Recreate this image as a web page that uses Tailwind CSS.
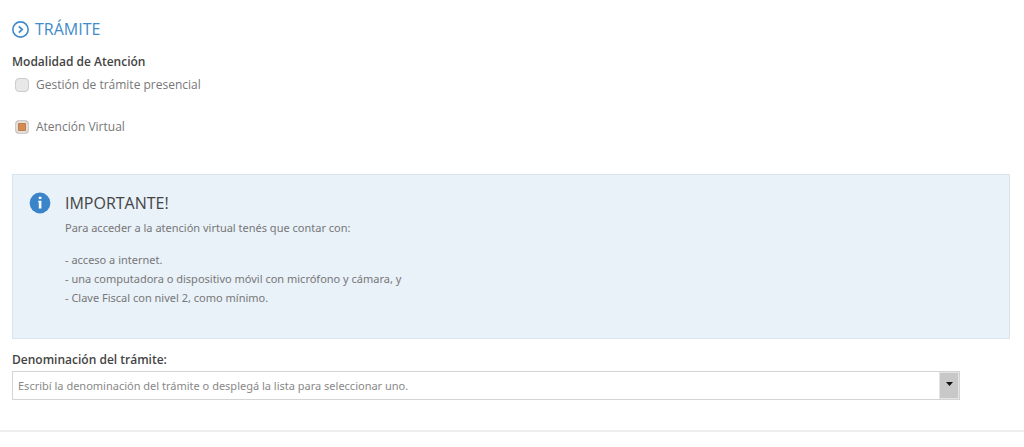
<!DOCTYPE html>
<html lang="es">
<head>
	<meta charset="utf-8">
	<meta name="viewport" content="width=device-width, initial-scale=1">
	<title>Trámite</title>
	<script src="https://cdn.jsdelivr.net/npm/@tailwindcss/browser@4"></script>
</head>
<body class="bg-white font-['Open_Sans','Noto_Sans',sans-serif] text-xs leading-5 text-[#777]">
	<form class="border-b-2 border-[#eee] pt-4 pr-3.5 pb-[30px] pl-3">
		<h1 class="flex items-center gap-1.5 text-base leading-[26px] text-[#428bca]">
			<svg class="size-[17px]" viewBox="0 0 18 18" fill="none" stroke="currentColor">
				<circle cx="9" cy="9" r="8.1" stroke-width="1.7"/>
				<path d="M7.2 5.6 10.8 9l-3.6 3.4" stroke-width="1.9"/>
			</svg>
			TRÁMITE
		</h1>

		<fieldset class="mt-2.5">
			<legend class="font-semibold text-[#444]">Modalidad de Atención</legend>
			<div class="flex items-center gap-1.5 pt-[3px] pl-[3px]">
				<input class="size-3.5 appearance-none rounded border border-[#ccc] bg-[#e8e8e8]" type="radio" name="modalidad" id="presencial">
				<label class="pl-px" for="presencial">Gestión de trámite presencial</label>
			</div>
			<div class="mt-[22px] flex items-center gap-1.5 pl-[3px]">
				<input class="size-3.5 appearance-none rounded border border-[#ccc] bg-[#e8e8e8] checked:bg-[#d98a4e] checked:shadow-[inset_0_0_0_2px_#e4e0d8,inset_0_0_0_3px_#b98055]" type="radio" name="modalidad" id="virtual" checked>
				<label class="pl-px" for="virtual">Atención Virtual</label>
			</div>
		</fieldset>

		<section class="mt-[37px] flex gap-3.5 border border-[#d8e5ee] bg-[#e9f1f9] pt-4 pb-[31px] pl-4 font-['Noto_Sans',sans-serif] text-[11px] leading-[19px]">
			<svg class="mt-px size-[22px]" viewBox="0 0 22 22">
				<circle cx="11" cy="11" r="10.4" fill="#3a84c9"/>
				<path d="M9.8 4.8h2.6v2.3H9.8zM9.2 8.7h3.2v7.9H9.8v-6.4h-.6z" fill="#fff"/>
			</svg>
			<div>
				<h2 class="font-['Open_Sans',sans-serif] text-base leading-6 text-[#444]">IMPORTANTE!</h2>
				<p class="mt-[3px]">Para acceder a la atención virtual tenés que contar con:</p>
				<ul class="mt-[13px]">
					<li>- acceso a internet.</li>
					<li>- una computadora o dispositivo móvil con micrófono y cámara, y</li>
					<li>- Clave Fiscal con nivel 2, como mínimo.</li>
				</ul>
			</div>
		</section>

		<label class="mt-[11px] block font-semibold text-[#444]" for="denominacion">Denominación del trámite:</label>
		<div class="mt-px flex h-[29px] w-[95%] border border-[#d4d4d4]">
			<input class="min-w-0 grow pl-[5px] font-['Noto_Sans',sans-serif] text-[11px] placeholder:text-[#888]" type="text" id="denominacion" placeholder="Escribí la denominación del trámite o desplegá la lista para seleccionar uno.">
			<button class="flex w-5 items-center justify-center border border-[#e4e4e4] bg-[#c8c8c8]" type="button" aria-label="Desplegar la lista">
				<svg class="mb-1 h-1 w-[7px]" viewBox="0 0 7 4"><path d="M0 0h7L3.5 4z" fill="#111"/></svg>
			</button>
		</div>
	</form>
</body>
</html>
